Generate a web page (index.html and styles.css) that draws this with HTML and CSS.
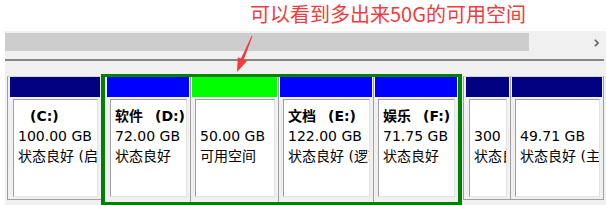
FILE: index.html
```html
<!DOCTYPE html>
<html lang="zh-CN">
<head>
<meta charset="utf-8">
<title>磁盘管理</title>
<link rel="stylesheet" href="styles.css">
</head>
<body>
<div class="note">可以看到多出来50G的可用空间</div>
<div class="pane">
  <div class="scroll">
    <div class="thumb"></div>
    <svg class="chev" viewBox="0 0 5 8" width="5" height="8"><path d="M0.8 0.8 L4 4 L0.8 7.2" fill="none" stroke="#606060" stroke-width="1.6"/></svg>
  </div>
  <div class="split"></div>
  <div class="row">
    <div class="cell out c">
      <div class="bar prim"></div>
      <div class="box">
        <div class="ln b"><span class="drv">(C:)</span></div>
        <div class="ln">100.00 GB</div>
        <div class="ln">状态良好 (启动, 页面文件, 故障转储, 主分区)</div>
      </div>
    </div>
    <div class="sel">
      <div class="cell in d">
        <div class="bar logi"></div>
        <div class="box">
          <div class="ln b">软件<span class="drv">(D:)</span></div>
          <div class="ln">72.00 GB</div>
          <div class="ln">状态良好</div>
        </div>
      </div>
      <div class="cell in fr">
        <div class="bar freeb"></div>
        <div class="box">
          <div class="ln b"></div>
          <div class="ln">50.00 GB</div>
          <div class="ln">可用空间</div>
        </div>
      </div>
      <div class="cell in e">
        <div class="bar logi"></div>
        <div class="box">
          <div class="ln b">文档<span class="drv">(E:)</span></div>
          <div class="ln">122.00 GB</div>
          <div class="ln">状态良好 (逻辑驱动器)</div>
        </div>
      </div>
      <div class="cell in f">
        <div class="bar logi"></div>
        <div class="box">
          <div class="ln b">娱乐<span class="drv">(F:)</span></div>
          <div class="ln">71.75 GB</div>
          <div class="ln">状态良好</div>
        </div>
      </div>
    </div>
    <div class="cell out g">
      <div class="bar prim"></div>
      <div class="box">
        <div class="ln b"></div>
        <div class="ln">300 MB</div>
        <div class="ln">状态良好 (恢复分区)</div>
      </div>
    </div>
    <div class="cell out h">
      <div class="bar prim"></div>
      <div class="box">
        <div class="ln b"></div>
        <div class="ln">49.71 GB</div>
        <div class="ln">状态良好 (主分区)</div>
      </div>
    </div>
  </div>
</div>
<svg class="arrow" viewBox="0 0 606 205" width="606" height="205">
  <polygon points="252.4,36.2 251.6,35.8 241,58.5 237.8,57.2 237,72 247,61 243.8,59.7" fill="#f03c3c"/>
</svg>
</body>
</html>
```
FILE: styles.css
```css
html, body {
  margin: 0;
  padding: 0;
}
body {
  position: relative;
  width: 606px;
  height: 205px;
  overflow: hidden;
  background: #ffffff;
  font-family: "Noto Sans CJK SC", sans-serif;
}
.note {
  height: 31px;
  padding-left: 250px;
  font-size: 20px;
  line-height: 27px;
  color: #f03c3c;
  white-space: nowrap;
}
.pane {
  margin-left: 5px;
  height: 174px;
  background: #f0f0f0;
}
.scroll {
  height: 21px;
  display: flex;
  align-items: flex-start;
}
.thumb {
  width: 524px;
  height: 18px;
  margin-top: 2px;
  background: #cdcdcd;
}
.chev {
  margin: 8px 7px 0 auto;
}
.split {
  margin-top: 7px;
  margin-right: 2px;
  height: 2px;
  background: #858585;
}
.row {
  display: flex;
  align-items: flex-start;
  padding-top: 13px;
}
.cell {
  flex: none;
  min-width: 0;
  padding: 0 1px;
  border-left: 1px solid #a0a0a0;
}
.out {
  margin-top: 2px;
  height: 122px;
  border-top: 1px solid #d4d4d4;
  border-bottom: 1px solid #a0a0a0;
}
.in {
  height: 125px;
}
.c {
  margin-left: 2px;
  padding-left: 2px;
}
.d {
  border-left: 0;
  padding-left: 2px;
}
.g {
  margin-left: 1px;
  padding-left: 2px;
}
.h {
  border-right: 1px solid #a0a0a0;
}
.bar {
  height: 20px;
}
.c .bar { width: 90px; }
.d .bar { width: 82px; }
.fr .bar { width: 85px; }
.e .bar { width: 92px; }
.f .bar { width: 82px; }
.g .bar { width: 43px; }
.h .bar { width: 90px; }
.prim { background: #000080; }
.logi { background: #0000ff; }
.freeb { background: #00ff00; }
.sel {
  flex: none;
  display: flex;
  border-style: solid;
  border-color: #008000;
  border-width: 3px 4px;
}
.box {
  contain: inline-size;
  box-sizing: border-box;
  height: 98px;
  margin: 2px 2px 0 3px;
  padding: 6px 0 0 4px;
  background: #ffffff;
  border: 1px solid;
  border-color: #a0a0a0 #e3e3e3 #e3e3e3 #a0a0a0;
  overflow: hidden;
  white-space: nowrap;
  font-family: "DejaVu Sans", "Noto Sans CJK SC", sans-serif;
  font-size: 14px;
  line-height: 20px;
  color: #000000;
}
.ln {
  height: 20px;
}
.ln.b {
  font-weight: bold;
}
.drv {
  padding-left: 12px;
}
.arrow {
  position: absolute;
  left: 0;
  top: 0;
  pointer-events: none;
}
```
